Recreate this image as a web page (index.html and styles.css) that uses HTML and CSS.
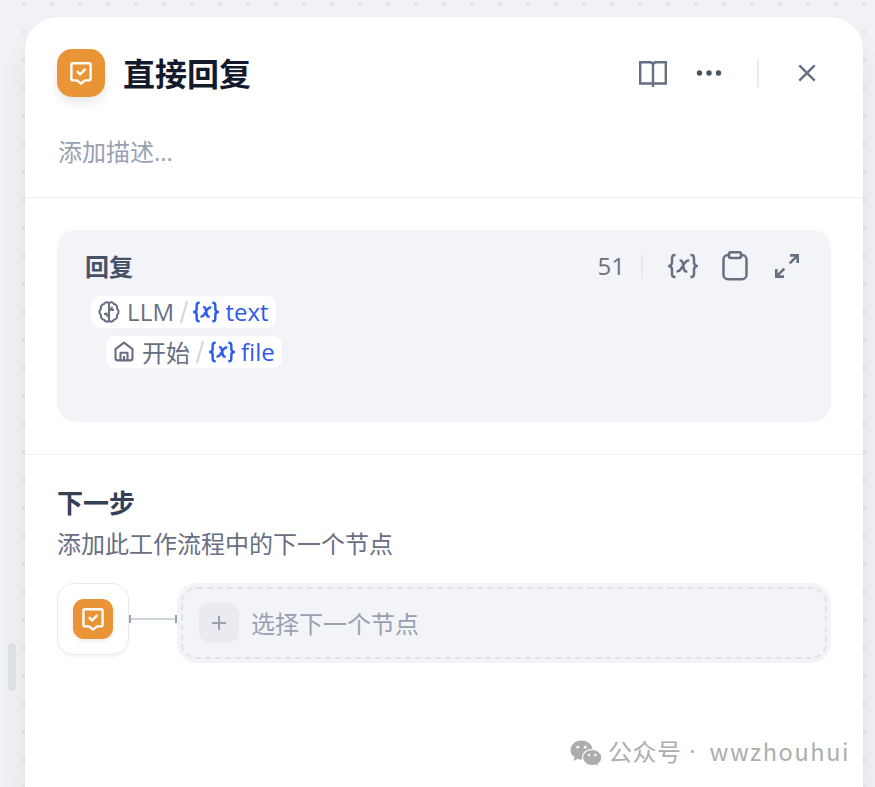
FILE: index.html
```html
<!DOCTYPE html>
<html lang="zh-CN">
<head>
<meta charset="utf-8">
<title>直接回复</title>
<link rel="stylesheet" href="styles.css">
</head>
<body>
<svg class="sprite" aria-hidden="true">
  <symbol id="answer" viewBox="0 0 24 24"><path d="M4 2.200h16a1.600 1.600 0 0 1 1.600 1.600v14a1.600 1.600 0 0 1-1.600 1.600h-4.100L12 22.600l-3.900-3.200H4a1.600 1.600 0 0 1-1.600-1.600v-14A1.600 1.600 0 0 1 4 2.200Z"/><path d="m8.600 10.800 2.500 2.500 4.700-4.700"/></symbol>
  <symbol id="variable" viewBox="0 0 30 26"><path d="M7.500 2H6.800Q4 2 4 5v4.500Q4 12 1.300 13 4 14 4 16.500V21q0 3 2.800 3h.7M22.500 2h.7Q26 2 26 5v4.500q0 2.500 2.700 3.500-2.700 1-2.700 3.500V21q0 3-2.800 3h-.7"/><path d="M11.600 7.600c1.800-.5 2.600.3 3.100 2.600l1.100 5.400c.5 2.300 1.500 3.200 3.500 2.700M21.200 7.800c-1.700-.6-3 .1-4.300 1.900l-4 6.300c-1.300 1.900-2.700 2.700-4.300 2.100"/></symbol>
</svg>
<span class="resize-handle"></span>
<main class="panel">
  <header class="header">
    <div class="heading">
      <span class="node-icon"><svg class="answer-glyph"><use href="#answer"/></svg></span>
      <h1 class="title">直接回复</h1>
      <div class="actions">
        <svg class="book" viewBox="0 0 28 28"><path d="M1.200 3.200h9.600q3.200 0 3.200 2.800 0-2.800 3.200-2.800h9.600v21.300H1.200ZM14 5v23"/></svg>
        <svg class="more" viewBox="0 0 26 8"><circle cx="3.500" cy="4" r="2.700"/><circle cx="13" cy="4" r="2.700"/><circle cx="22.500" cy="4" r="2.700"/></svg>
        <span class="action-line"></span>
        <svg class="close" viewBox="0 0 18 18"><path d="m1.300 1.300 15.400 15.400M16.700 1.300 1.300 16.700"/></svg>
      </div>
    </div>
    <p class="description">添加描述...</p>
  </header>
  <section class="reply">
    <div class="editor">
      <div class="editor-head">
        <h2 class="editor-title">回复</h2>
        <span class="count">51</span>
        <span class="count-line"></span>
        <svg class="insert"><use href="#variable"/></svg>
        <svg class="clipboard" viewBox="0 0 26 30"><path d="M7 4H6a4.500 4.500 0 0 0-4.500 4.500v15.300A4.500 4.500 0 0 0 6 28.300h14a4.500 4.500 0 0 0 4.500-4.500V8.500A4.500 4.500 0 0 0 20 4h-1"/><rect x="7" y="1.300" width="12" height="5.800" rx="2"/></svg>
        <svg class="expand" viewBox="0 0 26 26"><path d="M16 2.400h7.700v7.700M23.200 2.900l-7.500 7.500M10 23.600H2.300v-7.700M2.800 23.100l7.500-7.500"/></svg>
      </div>
      <div class="line">
        <span class="chip">
          <svg class="chip-icon" viewBox="0 0 22 22"><path d="M11 2.300C9.500.6 6.600 1 5.900 3.300 3.500 3.500 2.300 5.700 3.100 7.600 1 9 .9 12.700 3 14.200c-.6 2.300.8 4.300 3 4.500.8 2.200 3.600 2.500 5 1 1.400 1.500 4.200 1.200 5-1 2.200-.2 3.600-2.200 3-4.500 2.100-1.500 2-5.200-.1-6.600.8-1.900-.4-4.100-2.800-4.300C15.400 1 12.500.6 11 2.300ZM11 2.300v17.400M11 9.500q2.900-.3 2.900-3.700M11 15.300q-2.900-.3-2.900-3.700M8.100 13H6M13.900 9h2.200"/></svg>
          <span class="source">LLM</span><svg class="slash" viewBox="0 0 10 24"><path d="M8 1 2 23"/></svg><svg class="chip-var"><use href="#variable"/></svg><span class="name">text</span>
        </span>
      </div>
      <div class="line line-indented">
        <span class="chip">
          <svg class="chip-icon" viewBox="0 0 22 22"><path d="M2.500 8.200 11 1.600l8.500 6.600v8.800a2.400 2.400 0 0 1-2.400 2.400H4.900A2.400 2.400 0 0 1 2.500 17ZM7.500 19.200v-7.500h7v7.500M11 15v4.400"/></svg>
          <span class="source source-cjk">开始</span><svg class="slash" viewBox="0 0 10 24"><path d="M8 1 2 23"/></svg><svg class="chip-var"><use href="#variable"/></svg><span class="name">file</span>
        </span>
      </div>
    </div>
  </section>
  <section class="next">
    <h2 class="next-title">下一步</h2>
    <p class="next-text">添加此工作流程中的下一个节点</p>
    <div class="flow">
      <div class="current"><span class="node-icon node-icon-small"><svg class="answer-glyph"><use href="#answer"/></svg></span></div>
      <span class="connector"></span>
      <div class="picker"><div class="picker-inner">
        <span class="plus"><svg viewBox="0 0 14 14"><path d="M7 0v14M0 7h14"/></svg></span>
        <span class="picker-text">选择下一个节点</span>
      </div></div>
    </div>
  </section>
</main>
<div class="watermark">
  <svg class="wechat" viewBox="0 0 32 28"><path class="bubble" d="M11.500.5C5.300.5.500 4.700.500 10c0 3 1.500 5.600 3.900 7.300L3.500 21l4-2.100c1.300.4 2.600.6 4 .6 6.200 0 11-4.200 11-9.500S17.700.5 11.500.5Z"/><path class="bubble bubble-front" d="M22.200 9.300c-5.500 0-9.700 3.600-9.700 8.200s4.200 8.200 9.700 8.200c1.200 0 2.300-.2 3.400-.5l3.300 1.800-.8-3c2.300-1.500 3.700-3.800 3.700-6.500 0-4.600-4.200-8.200-9.600-8.200Z"/><g class="eyes"><circle cx="7.800" cy="7.200" r="1.400"/><circle cx="15.200" cy="7.200" r="1.400"/><circle cx="19" cy="15" r="1.200"/><circle cx="25.400" cy="15" r="1.200"/></g></svg>
  <span class="account">公众号</span><span class="dot">·</span><span class="handle">wwzhouhui</span>
</div>
</body>
</html>
```
FILE: styles.css
```css
* { box-sizing: border-box; }
body {
  margin: 0;
  height: 787px;
  padding: 17px 12px 0 25px;
  overflow: hidden;
  font-family: "Open Sans", "Noto Sans CJK SC", sans-serif;
  font-size: 24px;
  line-height: 32px;
  color: #676f83;
  background: radial-gradient(circle at 14px 14px, #e3e5e9 1.700px, transparent 2.300px) 10px -10px / 28px 28px #f1f2f5;
}
h1, h2, p { margin: 0; }
svg { display: block; flex: none; fill: none; stroke: currentColor; stroke-width: 2.400; overflow: visible; }
.sprite { position: absolute; width: 0; height: 0; }
.resize-handle { position: absolute; left: 8px; top: 643px; width: 8px; height: 48px; border-radius: 4px; background: #dcdfe4; z-index: 1; }
.panel { height: 770px; border-radius: 32px 32px 0 0; background: #fff; box-shadow: 0 0 1px #d8dae0, 0 24px 36px -4px rgba(16, 24, 40, .09); }
.header { height: 181px; padding: 32px 32px 0; border-bottom: 1px solid #eeeff1; }
.heading { display: flex; align-items: center; height: 48px; }
.node-icon { display: flex; align-items: center; justify-content: center; width: 48px; height: 48px; border-radius: 15px; color: #fff; background: #e99537; box-shadow: 0 6px 12px -2px rgba(16, 24, 40, .12); flex: none; }
.answer-glyph { width: 24px; height: 24px; stroke-linejoin: round; stroke-linecap: round; }
.title { margin-left: 18px; padding-top: 2px; font-size: 32px; line-height: 48px; color: #131a2b; font-weight: 700; }
.actions { display: flex; align-items: center; margin-left: auto; padding-right: 15px; }
.book { width: 28px; height: 28px; margin-right: 29px; }
.more { width: 26px; height: 8px; fill: #475467; stroke: none; }
.action-line { width: 2px; height: 28px; margin: 0 39px 0 35px; background: #e9eaec; }
.close { width: 18px; height: 18px; }
.description { margin: 39px 0 0 1px; color: #98a1b2; }
.reply { height: 257px; padding: 32px; border-bottom: 1px solid #eeeff1; }
.editor { height: 192px; padding: 20px 28px; border-radius: 19px; background: #f2f4f8; }
.editor-head { display: flex; align-items: center; height: 32px; padding-right: 3px; }
.editor-title { padding-top: 1px; font-size: 24px; line-height: 32px; color: #475268; }
.count { margin-left: auto; }
.count-line { width: 2px; height: 24px; margin: 0 25px 0 16px; background: #e7e9ee; }
.insert { width: 30px; height: 26px; stroke-width: 2.500; }
.clipboard { width: 26px; height: 30px; margin: 0 26px 0 24px; stroke-width: 2.500; }
.expand { width: 26px; height: 26px; stroke-width: 2.600; }
.line { display: flex; height: 40px; padding: 14px 0 0 6px; }
.line-indented { padding-left: 21px; }
.chip { display: flex; align-items: center; height: 32px; padding: 0 7px; border-radius: 8px; background: #fff; flex: none; box-shadow: 0 0 1px #e1e4ea; }
.chip-icon { width: 22px; height: 22px; margin-right: 7px; stroke-width: 2.100; stroke-linejoin: round; }
.source { margin-right: 1px; letter-spacing: .25px; }
.source-cjk { padding-top: 1px; letter-spacing: 0; }
.slash { width: 10px; height: 24px; margin: 0 4px; color: #d0d5dd; stroke-width: 2; }
.chip-var { width: 26px; height: 22px; stroke-width: 2.900; color: #2f5be9; }
.name { margin-left: 6px; color: #2f5be9; }
.next { padding: 32px 32px 0; }
.next-title { font-size: 26px; line-height: 32px; color: #344054; }
.next-text { margin-top: 9px; }
.flow { display: flex; align-items: flex-start; margin-top: 23px; }
.current { display: flex; align-items: center; justify-content: center; width: 72px; height: 72px; border: 1px solid #e9eaed; border-radius: 17px; box-shadow: 0 2px 3px rgba(16, 24, 40, .05); }
.node-icon-small { width: 40px; height: 40px; border-radius: 11px; box-shadow: 0 2px 4px rgba(16, 24, 40, .08); }
.connector { display: flex; width: 48px; height: 8px; margin-top: 32px; border: solid #98a2b3; border-width: 0 2px; background: linear-gradient(#d0d5dd, #d0d5dd) center / 100% 2px no-repeat; }
.picker { flex: 1; height: 80px; padding: 4px; border-radius: 20px; background: #f2f4f8; color: #98a1b2; }
.picker-inner { display: flex; align-items: center; height: 72px; padding-left: 16px; border: 2px dashed #e0e2e7; border-radius: 16px; }
.picker-text { padding-top: 1px; }
.plus { display: flex; align-items: center; justify-content: center; width: 40px; height: 40px; margin-right: 12px; border-radius: 11px; background: #e9ebf0; }
.plus svg { width: 14px; height: 14px; stroke-width: 2; }
.watermark { position: absolute; left: 570px; top: 735px; display: flex; align-items: center; height: 32px; color: #adadad; font-family: "Noto Sans CJK SC", sans-serif; white-space: nowrap; }
.wechat { width: 32px; height: 28px; margin-top: 5px; }
.bubble { fill: #adadad; stroke: none; }
.bubble-front { stroke: #fff; stroke-width: 1.200; }
.eyes { fill: #fff; stroke: none; }
.account { margin-left: 6px; letter-spacing: .5px; }
.dot { width: 28px; text-align: center; font-family: "Open Sans", sans-serif; padding-right: 6px; }
.handle { letter-spacing: 1.600px; font-size: 23.500px; }
```
